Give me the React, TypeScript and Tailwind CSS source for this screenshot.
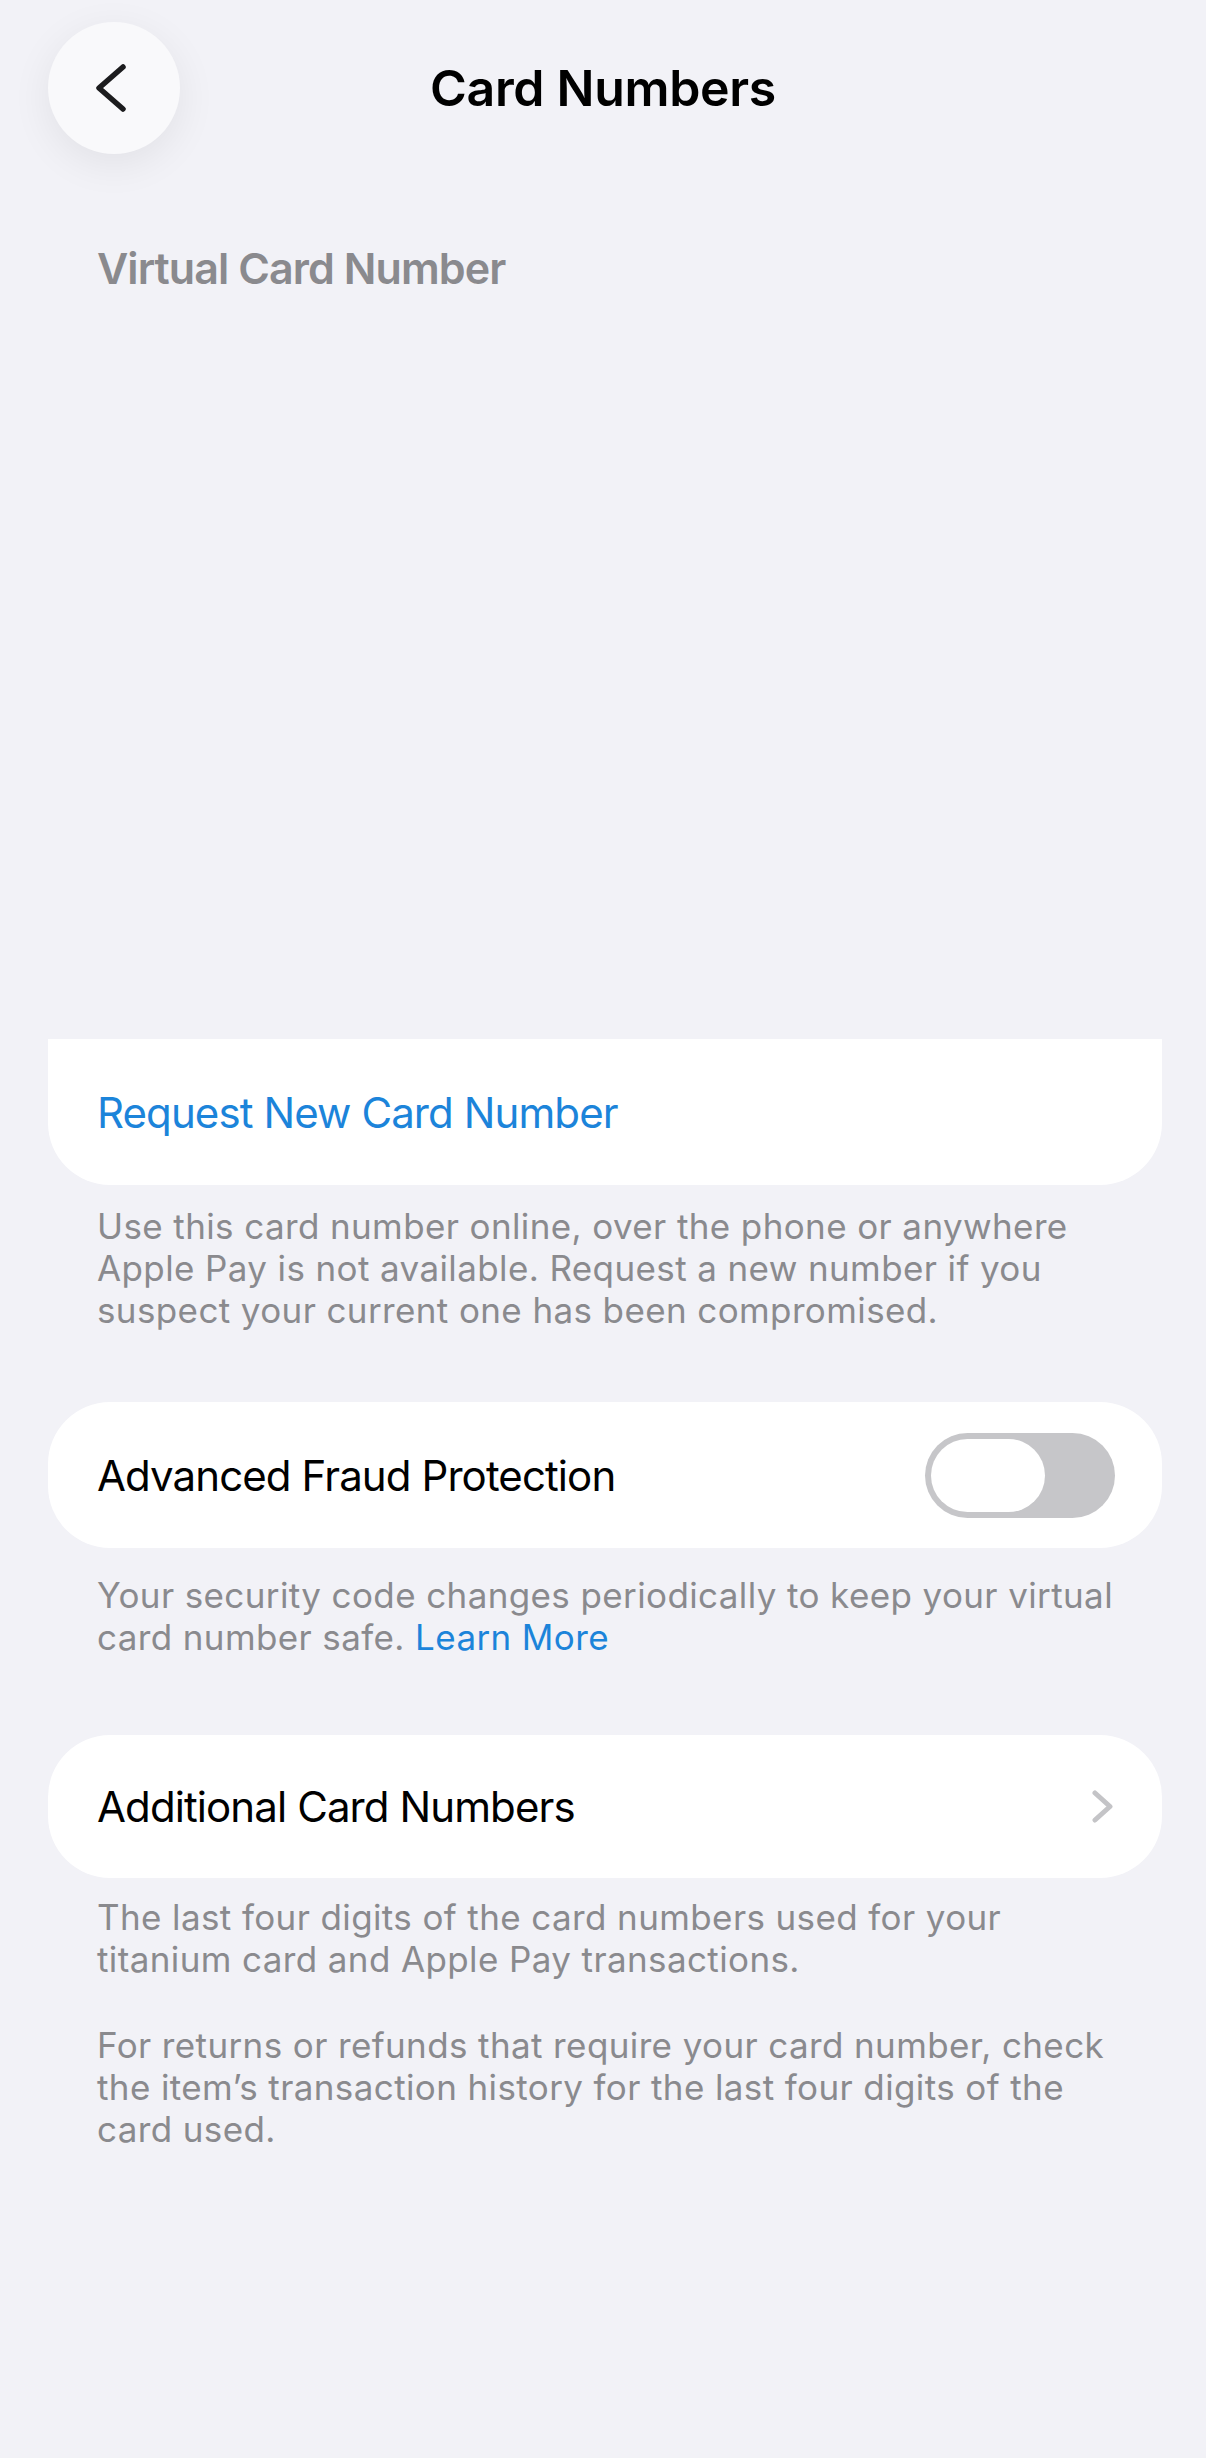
import { ReactNode } from "react";

function BackButton() {
  return (
    <button className="flex h-[132px] w-[132px] items-center justify-center rounded-full bg-[#f9f9fb] shadow-[0_10px_40px_rgba(0,0,0,0.07)]">
      <svg width="132" height="132" viewBox="0 0 132 132" fill="none">
        <path
          d="M75 45 L51 66 L75 87"
          stroke="#1c1c1e"
          strokeWidth="5.5"
          strokeLinecap="round"
          strokeLinejoin="round"
        />
      </svg>
    </button>
  );
}

function Toggle() {
  return (
    <div className="flex h-[85px] w-[190px] items-center rounded-full bg-[#c6c6c9] p-[6px]">
      <div className="h-[73px] w-[114px] rounded-full bg-white" />
    </div>
  );
}

function Footer({ className, children }: { className?: string; children: ReactNode }) {
  return (
    <p
      className={`pl-[97px] pr-[40px] text-[35px] leading-[42px] tracking-[0.011em] whitespace-nowrap text-[#8a8a8e] ${className ?? ""}`}
    >
      {children}
    </p>
  );
}

export default function App() {
  return (
    <div className="min-h-[2458px] bg-[#f2f2f7] font-['Inter',sans-serif] tracking-[-0.02em]">
      <header className="grid grid-cols-[132px_1fr_132px] items-center px-[48px] pt-[22px]">
        <BackButton />
        <h1 className="text-center text-[50px] font-semibold text-black">Card Numbers</h1>
        <div />
      </header>

      <h2 className="mt-[88px] px-[97px] text-[43px] leading-[52px] font-semibold tracking-[-0.0215em] text-[#8a8a8e]">
        Virtual Card Number
      </h2>

      <div className="mt-[745px] ml-[48px] mr-[44px] flex h-[146px] items-center rounded-b-[62px] bg-white pl-[49px]">
        <span className="text-[42px] tracking-[-0.0215em] text-[#1c84da]">Request New Card Number</span>
      </div>
      <Footer className="mt-[20px]">
        Use this card number online, over the phone or anywhere
        <br />
        Apple Pay is not available. Request a new number if you
        <br />
        suspect your current one has been compromised.
      </Footer>

      <div className="mt-[71px] ml-[48px] mr-[44px] flex h-[146px] items-center justify-between rounded-[62px] bg-white pl-[49px] pr-[47px]">
        <span className="text-[42px] tracking-[-0.0215em] text-black">Advanced Fraud Protection</span>
        <Toggle />
      </div>
      <Footer className="mt-[26px]">
        Your security code changes periodically to keep your virtual
        <br />
        card number safe. <span className="text-[#1c84da]">Learn More</span>
      </Footer>

      <div className="mt-[77px] ml-[48px] mr-[44px] flex h-[143px] items-center justify-between rounded-[62px] bg-white pl-[49px] pr-[48px]">
        <span className="text-[42px] tracking-[-0.0215em] text-black">Additional Card Numbers</span>
        <svg width="22" height="33" viewBox="0 0 22 33" fill="none">
          <path
            d="M3 3 L18 16.5 L3 30"
            stroke="#c4c4c7"
            strokeWidth="5"
            strokeLinecap="round"
            strokeLinejoin="round"
          />
        </svg>
      </div>
      <Footer className="mt-[18px]">
        The last four digits of the card numbers used for your
        <br />
        titanium card and Apple Pay transactions.
      </Footer>
      <Footer className="mt-[44px]">
        For returns or refunds that require your card number, check
        <br />
        the item’s transaction history for the last four digits of the
        <br />
        card used.
      </Footer>
    </div>
  );
}
